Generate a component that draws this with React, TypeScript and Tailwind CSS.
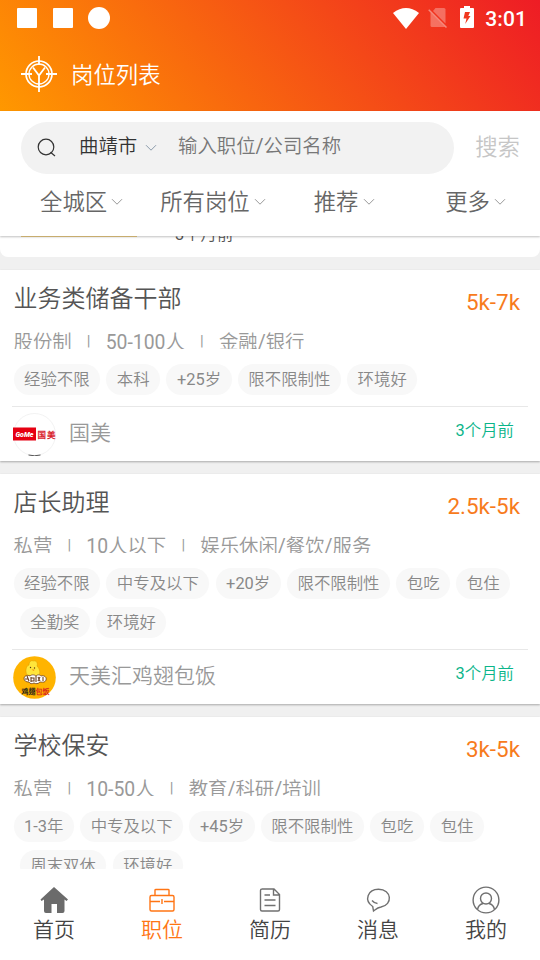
import React from "react";

type Job = {
  title: string;
  salary: string;
  meta: string[];
  tags: string[];
  company: string;
  time: string;
  logo: React.ReactNode;
};

const GomeLogo = () => (
  <svg width="43" height="43" viewBox="0 0 43 43">
    <circle cx="21.5" cy="21.5" r="21" fill="#fff" stroke="#ececec" strokeWidth="0.7" />
    <path d="M15.5 42 Q21.5 43.6 27.5 42" stroke="#555" strokeWidth="1" fill="none" />
    <rect x="0" y="14.5" width="23" height="13" fill="#e60012" />
    <text x="2.5" y="24" fontSize="8" fontWeight="900" fontStyle="italic" fill="#fff" textLength="18" lengthAdjust="spacingAndGlyphs">GoMe</text>
    <text x="24.5" y="24.5" fontSize="8.5" fontWeight="900" fill="#d8202c">国</text>
    <text x="34" y="24.5" fontSize="8.5" fontWeight="900" fill="#d8202c">美</text>
  </svg>
);

const ChickenLogo = () => (
  <svg width="43" height="43" viewBox="0 0 43 43">
    <circle cx="21.5" cy="21.5" r="21.3" fill="#ffb400" />
    <path
      d="M14 19c-2-4-1-9 2-10 0-3 2-5 4-4 4-1 5 3 4 5 3 3 4 8 1 11z"
      fill="#ffe53b"
      stroke="#d99a00"
      strokeWidth="0.5"
    />
    <circle cx="17.5" cy="11.5" r="0.7" fill="#5c3413" />
    <circle cx="21.5" cy="12" r="0.7" fill="#5c3413" />
    <path d="M18.5 13.5l2 1.3 1.3-1z" fill="#f07800" />
    <path
      d="M11 22c1-3 4-3 6-2 2-2 5-1 6 0 2-2 4-1 5 0 3-1 6 1 5 4-1 3-4 2-6 2-2 2-4 2-6 1-2 1-4 1-5-1-3 0-5-1-5-4z"
      fill="#fff"
      stroke="#6b3e1c"
      strokeWidth="0.8"
    />
    <path d="M14 20l2 5M15 23h-3M18 21v5M18 22h3v3h-3M23 20v6M25 21l2 4M27 21l-2 4M30 21v4" stroke="#6b3e1c" strokeWidth="1.100" fill="none" />
    <text x="8.500" y="37.500" fontSize="7" fontWeight="900" fill="#1a1a1a">鸡翅</text>
    <text x="22.500" y="37.500" fontSize="7" fontWeight="900" fill="#d81f1f">包饭</text>
  </svg>
);

const jobs: Job[] = [
  {
    title: "业务类储备干部",
    salary: "5k-7k",
    meta: ["股份制", "50-100人", "金融/银行"],
    tags: ["经验不限", "本科", "+25岁", "限不限制性", "环境好"],
    company: "国美",
    time: "3个月前",
    logo: <GomeLogo />,
  },
  {
    title: "店长助理",
    salary: "2.5k-5k",
    meta: ["私营", "10人以下", "娱乐休闲/餐饮/服务"],
    tags: ["经验不限", "中专及以下", "+20岁", "限不限制性", "包吃", "包住", "全勤奖", "环境好"],
    company: "天美汇鸡翅包饭",
    time: "3个月前",
    logo: <ChickenLogo />,
  },
  {
    title: "学校保安",
    salary: "3k-5k",
    meta: ["私营", "10-50人", "教育/科研/培训"],
    tags: ["1-3年", "中专及以下", "+45岁", "限不限制性", "包吃", "包住", "周末双休", "环境好"],
    company: "",
    time: "",
    logo: null,
  },
];

const Chevron: React.FC<{ color?: string }> = ({ color = "#999" }) => (
  <svg className="shrink-0" width="12" height="8" viewBox="0 0 12 8" fill="none" stroke={color} strokeWidth="1">
    <path d="M1 1.200L6 6.200L11 1.200" />
  </svg>
);

const StatusBar = () => (
  <div className="flex h-9 items-center pl-[17px] pr-[13px]">
    <div className="h-5 w-5 rounded-[1px] bg-white" />
    <div className="ml-4 h-5 w-5 rounded-[1px] bg-white" />
    <div className="ml-[15px] h-[22px] w-[22px] rounded-full bg-white" />
    <svg className="ml-auto" width="26" height="21" viewBox="0 0 26 21" fill="#fff">
      <path d="M0 5Q13-5 26 5L13 21z" />
    </svg>
    <svg className="ml-[9px]" width="20" height="20" viewBox="0 0 20 20">
      <path d="M7.500 0H16a1.500 1.500 0 0 1 1.500 1.500V15.500L5 3z" fill="#fff" opacity="0.3" />
      <path d="M2.500 4.500L17 19H4a1.500 1.500 0 0 1-1.500-1.500z" fill="#fff" opacity="0.3" />
      <path d="M.7 1.700L18.500 19.500" stroke="#fff" strokeWidth="1.500" opacity="0.42" />
    </svg>
    <svg className="-mt-0.5 ml-[12px]" width="14" height="22" viewBox="0 0 14 22">
      <path d="M4 0h6v2h3q1 0 1 1v18q0 1-1 1H1q-1 0-1-1V3q0-1 1-1h3z" fill="#fff" />
      <path d="M5 6h5L8.300 10H10.500L5.200 18 6.500 12.500H3.500z" fill="#f0381e" />
    </svg>
    <span className="ml-[11px] mt-0.5 text-[21px] font-medium leading-none tracking-[0.1px]">3:01</span>
  </div>
);

const Header = () => (
  <div className="h-[111px] shrink-0 bg-[linear-gradient(50deg,#ff9800_0%,#ee1c25_100%)] text-white">
    <StatusBar />
    <div className="flex h-[75px] items-center pl-[21px]">
      <svg width="36" height="36" viewBox="0 0 36 36" fill="none" stroke="#fff" strokeWidth="1.500">
        <circle cx="18" cy="18" r="13" strokeWidth="1.700" />
        <circle cx="18" cy="18" r="10" strokeWidth="1.300" />
        <path d="M18 0v9M18 19v17M0 18h11M25 18h11M12 11.500l6 8 6-8" strokeWidth="1.800" />
      </svg>
      <h1 className="ml-[14px] pt-[3px] text-[22.400px] leading-none">岗位列表</h1>
    </div>
  </div>
);

const SearchBar = () => (
  <div className="flex items-center pl-[21px] pr-5 pt-[11px]">
    <div className="flex h-[52px] w-[433px] items-center rounded-full bg-[#f2f2f2] pl-4">
      <svg width="20" height="20" viewBox="0 0 20 20" fill="none" stroke="#333" strokeWidth="1.200">
        <circle cx="9" cy="9" r="7.800" />
        <path d="M13.500 14.300L18 18" />
      </svg>
      <span className="ml-[22px] w-[59px] whitespace-nowrap pb-[3px] text-[19.400px] text-[#333]">曲靖市</span>
      <span className="ml-[7px]">
        <Chevron color="#8b9bab" />
      </span>
      <span className="ml-[21px] pb-[3px] text-[19.400px] text-[#777]">输入职位/公司名称</span>
    </div>
    <span className="ml-auto text-[22.400px] text-[#c6c6c6]">搜索</span>
  </div>
);

const Filters = () => (
  <div className="flex h-[56px] text-[22.400px] leading-[56px] text-[#666]">
    <div className="flex items-center gap-[4px] pl-10">
      全城区
      <Chevron />
    </div>
    <div className="ml-[37px] flex items-center gap-[4px]">
      所有岗位
      <Chevron />
    </div>
    <div className="ml-12 flex items-center gap-[4px]">
      推荐
      <Chevron />
    </div>
    <div className="ml-auto flex items-center gap-[4px] pr-[34px]">
      更多
      <Chevron />
    </div>
  </div>
);

const JobCard: React.FC<{ job: Job }> = ({ job }) => (
  <div className="mb-[13px] shrink-0 bg-white shadow-[0_1px_2px_rgba(0,0,0,0.3)]">
    <div className="flex h-[62px] justify-between pl-[13.500px] pr-5">
      <h2 className="pt-3 text-[24px] leading-[35px] text-[#555]">{job.title}</h2>
      <span className="pt-[15px] text-[22.400px] leading-[34px] text-[#f77b1c]">{job.salary}</span>
    </div>
    <div className="flex h-[17px] overflow-hidden pl-[13.500px] text-[19.400px] leading-[21px] text-[#999]">
      {job.meta.map((m, i) => (
        <React.Fragment key={m}>
          {i > 0 && <span className="w-[34px] text-center text-[15px] leading-[18px]">|</span>}
          <span>{m}</span>
        </React.Fragment>
      ))}
    </div>
    <div className="mt-[15px] flex flex-wrap pl-[13.500px]">
      {job.tags.map((tag) => (
        <span
          key={tag}
          className="mb-2 ml-[6.300px] h-[31px] rounded-full bg-[#f8f8f8] px-[10.500px] text-[16.400px] leading-[31px] text-[#888] first:ml-0"
        >
          {tag}
        </span>
      ))}
    </div>
    <div className="ml-3 mr-3 mt-[3px] flex h-[55px] border-t border-[#e8e8e8]">
      <div className="ml-[1px] mt-[6px] h-[43px] w-[43px]">{job.logo}</div>
      <span className="ml-[13px] text-[21px] leading-[53px] text-[#999]">{job.company}</span>
      <span className="ml-auto pr-[14px] text-[16.400px] leading-[47px] text-[#0bb58a]">{job.time}</span>
    </div>
  </div>
);

const navItems = [
  {
    label: "首页",
    icon: (
      <path
        d="M14 1L28 13.500 26.500 15 24.500 13.500V25Q24.500 27 22.500 27H17V18H11.500V27H6Q4 27 4 25V13.500L1.500 15 .5 13.500z"
        fill="#6b6b6b"
        stroke="none"
      />
    ),
  },
  {
    label: "职位",
    active: true,
    icon: <path d="M2 11Q2 9.500 3.500 9.500H24.500Q26 9.500 26 11V23.500Q26 25 24.500 25H3.500Q2 25 2 23.500zM2 15.500H12M16 15.500H26M14 13V18M7 9V4Q7 3.500 8 3.500H20Q21 3.500 21 4V9" />,
  },
  {
    label: "简历",
    icon: <path d="M5.500 3H18L23.500 8.500V23.500Q23.500 25 22 25H6Q4.500 25 4.500 23.500V4.500Q4.500 3 6 3M17.500 3V9H23.500M8.500 9H14M8.500 14H19.500M8.500 19.500H19.500" />,
  },
  {
    label: "消息",
    icon: <path d="M9.500 25L8.700 20.500C-.5 14 4 3.200 14.500 3.200C28 3.200 29 19 17 21C13.500 21.500 11.500 23.500 9.500 25zM8 14.500Q10.500 17.500 13.500 17.500" />,
  },
  {
    label: "我的",
    icon: (
      <>
        <circle cx="14" cy="14" r="12.900" />
        <circle cx="14" cy="12.500" r="5.500" />
        <path d="M5.500 23.500Q6.500 18.500 11 17.500M22.500 23.500Q21.500 18.500 17 17.500" />
      </>
    ),
  },
];

const BottomNav = () => (
  <nav className="grid h-[91px] shrink-0 grid-cols-5 bg-white pt-[17px]">
    {navItems.map((item) => (
      <div
        key={item.label}
        className={item.active ? "flex flex-col items-center text-[#ff7514]" : "flex flex-col items-center text-[#444]"}
      >
        <svg
          className="-ml-px"
          width="28"
          height="28"
          viewBox="0 0 28 28"
          fill="none"
          stroke={item.active ? "#ff7514" : "#707070"}
          strokeWidth="1.400"
        >
          {item.icon}
        </svg>
        <span className="text-[21px] leading-[32px]">{item.label}</span>
      </div>
    ))}
  </nav>
);

const App: React.FC = () => {
  return (
    <div className="flex h-[960px] w-[540px] flex-col overflow-hidden bg-[#f0f0f0] font-['Roboto','Noto_Sans_CJK_SC_DemiLight','Noto_Sans_CJK_SC',sans-serif] font-normal">
      <Header />
      <div className="z-10 h-[125px] shrink-0 bg-white shadow-[0_1px_2px_rgba(0,0,0,0.25)]">
        <SearchBar />
        <Filters />
      </div>

      <div className="flex min-h-0 flex-1 flex-col overflow-hidden">
        {/* tail of the card scrolled under the filter bar */}
        <div className="mb-[13px] flex h-[21px] shrink-0 items-end overflow-hidden rounded-b-lg bg-white pl-[21px]">
          <div className="h-[21px] w-[116px] border-t border-[#f0cf85]" />
          <span className="mb-[10px] ml-[38px] text-[16.400px] leading-[24px] text-[#555]">3个月前</span>
        </div>
        {jobs.map((job) => (
          <JobCard key={job.title} job={job} />
        ))}
      </div>

      <BottomNav />
    </div>
  );
};

export default App;
